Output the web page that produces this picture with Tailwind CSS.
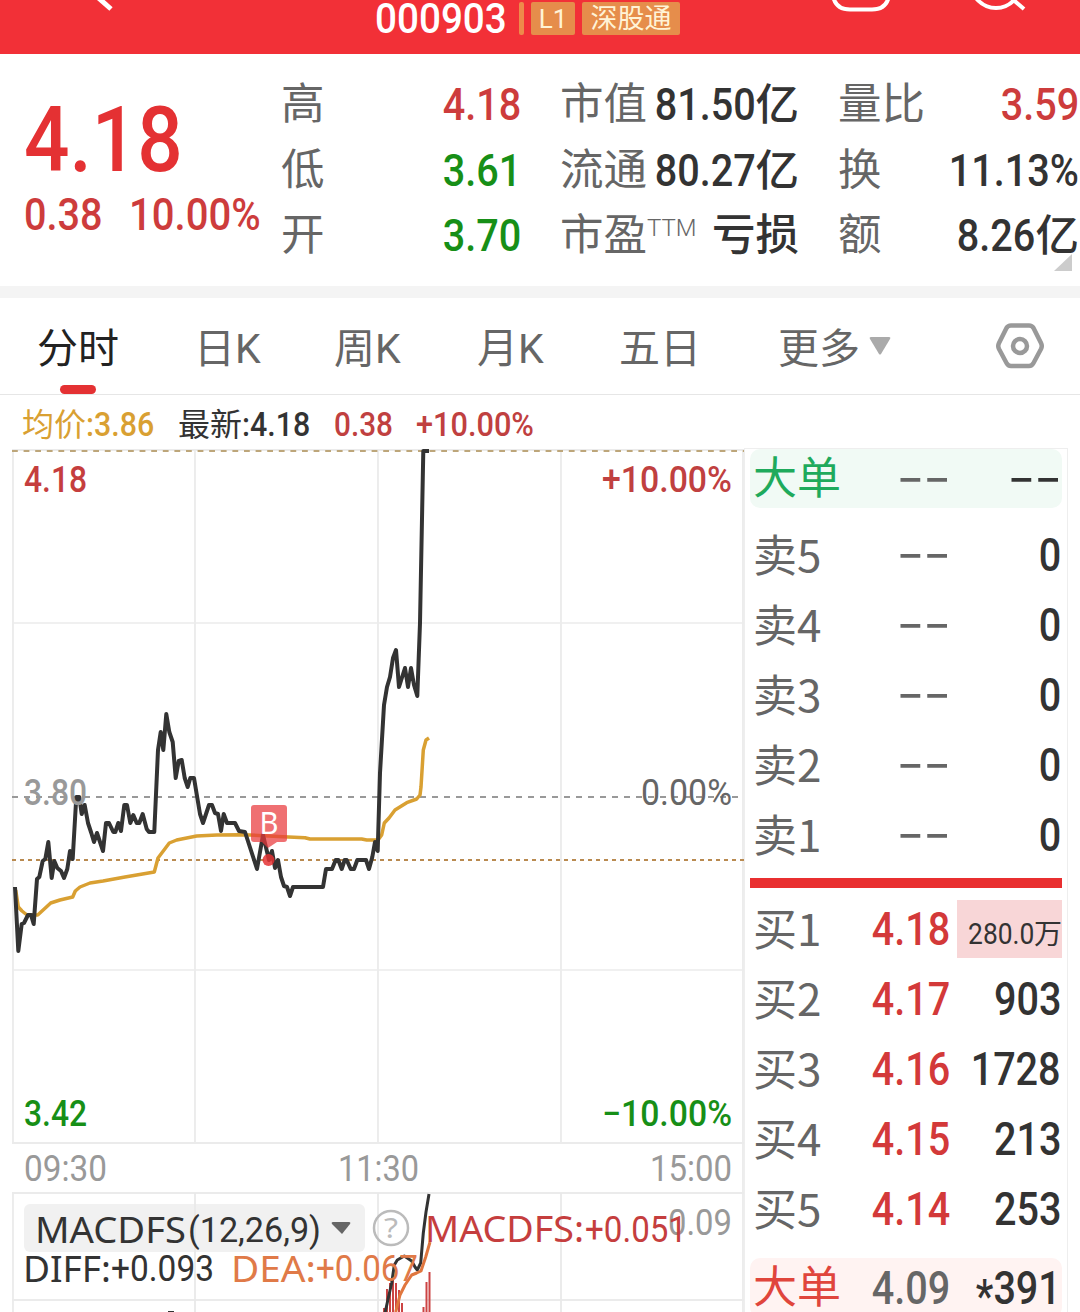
<!DOCTYPE html>
<html lang="zh-CN">
<head>
  <meta charset="UTF-8">
  <meta name="viewport" content="width=device-width, initial-scale=1.0">
  <title>000903 分时</title>
  <script src="https://cdn.jsdelivr.net/npm/@tailwindcss/browser@4"></script>
</head>
<body class="w-[1080px] h-[1312px] overflow-hidden bg-white font-['Roboto','Noto_Sans_CJK_SC',sans-serif] text-[#333] whitespace-nowrap">
  <!-- Header -->
  <header class="relative h-[54px] bg-[#f23037] overflow-hidden">
    <svg class="absolute inset-0" width="1080" height="54" fill="none" stroke="#fff" stroke-width="4">
      <path d="M94 -6L111 9" stroke-width="5"/>
      <path d="M833 -4C835 6 842 9.500 850 9.500H872C880 9.500 887 6 889 -4"/>
      <circle cx="996" cy="-17" r="25"/>
      <path d="M1010 -3L1024 9"/>
    </svg>
    <div class="flex items-center pl-[375px] h-[36px]">
      <div class="w-[144px] text-[42px] leading-[36px] pt-[2px] font-medium text-white"><span class="inline-block origin-left scale-x-[0.92]">000903</span></div>
      <div class="w-[5px] h-[33px] rounded-xs bg-[#ee8a4a]"></div>
      <div class="ml-[7px] w-[44px] h-[33px] rounded-xs bg-[#e68d4b] text-[#fff3d6] text-[26px] leading-[35px] text-center">L1</div>
      <div class="ml-[7px] w-[98px] h-[33px] rounded-xs bg-[#e68d4b] text-[#fff3d6] text-[27px] leading-[34px] text-center">深股通</div>
    </div>
  </header>

  <!-- Quote summary -->
  <section class="relative flex h-[232px] pl-[24px] pt-[21px]">
    <div class="w-[257px] text-[#e43133]">
      <div class="mt-[15px] h-[100px] leading-[100px] text-[91px] font-medium"><span class="inline-block origin-left scale-x-[0.88]">4.18</span></div>
      <div class="flex h-[50px] leading-[50px] text-[45px] text-[#cd3c3c]">
        <div class="w-[105px]"><span class="inline-block origin-left scale-x-[0.88] font-medium">0.38</span></div>
        <div><span class="inline-block origin-left scale-x-[0.89] font-medium">10.00%</span></div>
      </div>
    </div>
    <div id="stats" class="grid grid-flow-col grid-rows-[65.5px_65.5px_65.5px] grid-cols-[240px_239px_241px] gap-x-[39px] h-[197px] text-[43.5px] leading-[60px]"></div>
    <svg class="absolute right-[8px] top-[200px]" width="18" height="17"><path d="M18 0V17H0Z" fill="#ccc"/></svg>
  </section>

  <div class="h-[12px] bg-[#f4f4f4]"></div>

  <!-- Period tabs -->
  <nav class="relative flex h-[97px] border-b border-[#e6e6e6] text-[41px] leading-[102px] text-[#666]">
    <div class="w-[157px] pl-[37px] text-[#222]">分时</div>
    <div class="w-[140px] pl-[37px]">日K</div>
    <div class="w-[143px] pl-[37px]">周K</div>
    <div class="w-[142px] pl-[37px]">月K</div>
    <div class="w-[158px] pl-[37px]">五日</div>
    <div class="flex pl-[38px]">更多
      <svg class="ml-[8px] mt-[38px]" width="24" height="20"><path d="M3 1H21Q23 1 22 3L13 18Q12 19 11 18L2 3Q1 1 3 1Z" fill="#aaa"/></svg>
    </div>
    <svg class="absolute left-[994px] top-[23px]" width="52" height="50" fill="none" stroke="#999" stroke-width="4.5" stroke-linejoin="round">
      <path d="M17 4.500H35Q38 4.500 39.500 7L47 22Q48.500 25 47 28L39.500 42Q38 45 35 45H17Q14 45 12.500 42L5 28Q3.500 25 5 22L12.500 7Q14 4.500 17 4.500Z"/>
      <circle cx="26" cy="25" r="7"/>
    </svg>
    <div class="absolute left-[60px] top-[87px] w-[36px] h-[9px] rounded-full bg-[#e43133]"></div>
  </nav>

  <!-- Average / latest price -->
  <div class="flex h-[53px] pl-[22px] text-[33px] leading-[59px]">
    <div class="w-[156px] text-[#d9a032]"><span class="text-[32px]">均价</span><span class="inline-block origin-left scale-x-[0.92] font-medium">:3.86</span></div>
    <div class="w-[156px]"><span class="text-[32px]">最新</span><span class="inline-block origin-left scale-x-[0.92] font-medium">:4.18</span></div>
    <div class="w-[82px] text-[#c04040]"><span class="inline-block origin-left scale-x-[0.9] font-medium">0.38</span></div>
    <div class="text-[#c04040]"><span class="inline-block origin-left scale-x-[0.93] font-medium">+10.00%</span></div>
  </div>

  <main class="flex h-[864px]">
    <!-- Intraday chart and indicator panel -->
    <svg class="shrink-0" width="744" height="864" viewBox="0 448 744 864" fill="none">
      <g stroke="#ebebeb" stroke-width="1.800">
        <path d="M12 450H744M12 1143H744M13 450V1143M195 450V1143M378 450V1143M561 450V1143M743 450V1312"/>
        <path d="M12 623H744M12 970H744" stroke-width="1.300"/>
        <path d="M12 1193H744M12 1300H744M13 1193V1312"/>
      </g>
      <rect x="24" y="1204" width="341" height="48" rx="6" fill="#f1f1f1"/>
      <path d="M195 1193V1312M378 1193V1312M561 1193V1312" stroke="#e9e9e9" stroke-width="1.800"/>

      <path d="M12 451H744" stroke="#bda67a" stroke-width="2" stroke-dasharray="5.800 5.800"/>
      <path d="M12 797H744" stroke="#999" stroke-width="2" stroke-dasharray="6 6"/>
      <path d="M12 860H744" stroke="#b98a50" stroke-width="2" stroke-dasharray="4 4"/>

      <polyline stroke="#d9a032" stroke-width="3.500" stroke-linejoin="round" points="15.700,890 18.300,907 22,911 27,915 37.700,915 50.700,903 60,900 72.700,897 75.300,891 80,887 90,883 103,881 125,877 154.300,872 158,858 169.300,843 176.700,840 196.700,836 217,835 240,834.700 250,835 283,836.700 305,837.700 310,839 361.700,839 366.700,840 378,840 381.700,835 384.300,823 389,818 395,810 406.700,802.700 416.700,799 420,795 421,787 423.300,750 426,740 429,738"/>
      <polyline stroke="#333" stroke-width="4" stroke-linejoin="round" points="15,887 18.300,951 21.700,924 24,923 28,915 31,915 33.700,924 37,879 39.300,877 42.700,861 45.300,859 48.300,842 51.700,878 54.300,861 57.300,868 61,871 64,878 67.300,869 70,851 72.700,859 76.300,797 79.300,797 81.700,814 84.700,805 88,823 91.300,833 94,842 97,833 103,851 106,823 109,823 113.300,832 115.300,832 118.300,823 121,831 124.300,805 127,805 130.300,823 133.300,815 136.700,823 139.300,823 142.700,814 146.700,829 149,832 154.300,832 158,750 160.700,732 163.300,750 166.300,714 169.300,732 172.700,742 175.700,778 178.700,761 181.700,760 184.700,778 187.700,787 190.300,778 194,778 200,814 203,823 209,805 212,805 215,813 218,814 221,831 223.700,814 227,823 235,823 239,831 245,832 257,869 263,835 269,860 272,851 275,868 278,860 281,877 284,886 287,887 290,896 293,887 323,887 326,869 332,869 335.700,860 338.300,860 341.700,869 344.700,860 346.700,860 350.700,869 354,869 357.300,860 366,860 369,869 372.300,857 375,842 377.700,851 380,773 384,705 387,687 390,677 393,658 396,650 399,687 405,668 408,687 411,668 414,685 417.300,696 420,623 423.300,451 429,451"/>

      <!-- Buy marker -->
      <circle cx="268.500" cy="860" r="6" fill="#e43133" fill-opacity="0.85"/>
      <path d="M254 805H284Q287 805 287 808V839Q287 842 284 842H277L268 848L262 842H254Q251 842 251 839V808Q251 805 254 805Z" fill="#e9393c" fill-opacity="0.72"/>
      <text x="259.500" y="834" textLength="19" lengthAdjust="spacingAndGlyphs" font-size="30" fill="#fff" font-family="Noto Sans">B</text>

      <!-- Axis labels -->
      <g font-size="36" font-weight="500">
        <text x="24" y="492" textLength="63" lengthAdjust="spacingAndGlyphs" fill="#c53e3e">4.18</text>
        <text x="602" y="492" textLength="130" lengthAdjust="spacingAndGlyphs" fill="#c04040">+10.00%</text>
        <text x="24" y="805" textLength="63" lengthAdjust="spacingAndGlyphs" fill="#999">3.80</text>
        <text x="641" y="805" textLength="91" lengthAdjust="spacingAndGlyphs" fill="#666" font-weight="400">0.00%</text>
        <text x="24" y="1126" textLength="63" lengthAdjust="spacingAndGlyphs" fill="#178f17">3.42</text>
        <text x="602" y="1126" textLength="130" lengthAdjust="spacingAndGlyphs" fill="#178f17">−10.00%</text>
      </g>
      <g font-size="36" fill="#999">
        <text x="24" y="1181" textLength="83" lengthAdjust="spacingAndGlyphs">09:30</text>
        <text x="338" y="1181" textLength="81" lengthAdjust="spacingAndGlyphs">11:30</text>
        <text x="650" y="1181" textLength="82" lengthAdjust="spacingAndGlyphs">15:00</text>
        <text x="668" y="1235" textLength="64" lengthAdjust="spacingAndGlyphs">0.09</text>
      </g>

      <!-- MACD bars and lines -->
      <path d="M384 1308V1312M387 1289V1312M390 1283V1312M393 1278V1312M396 1283V1312M399 1290V1312M402 1303V1312M423.500 1307V1312M426.500 1282V1312M429.500 1272V1312" stroke="#cc4444" stroke-width="2"/>
      <path d="M168 1312H174" stroke="#333" stroke-width="2"/>
      <polyline stroke="#333" stroke-width="3" stroke-linejoin="round" points="429,1194 426,1212 423.300,1233 420.700,1263 417.300,1270 415,1267 411.700,1261 404.300,1256 397.300,1260 394.300,1265 391.700,1283 388.300,1298 385,1313"/>
      <polyline stroke="#e0763e" stroke-width="3" stroke-linejoin="round" points="430,1242 425.700,1257 421,1271 416.700,1273 411.700,1275 405,1285 400,1295 395.700,1312"/>

      <!-- Indicator legend -->
      <g font-family="Noto Sans" font-size="37">
        <text x="35" y="1243" textLength="151" lengthAdjust="spacingAndGlyphs" fill="#333">MACDFS</text>
        <text x="188" y="1242" textLength="133" lengthAdjust="spacingAndGlyphs" fill="#333" font-family="Roboto" font-size="35">(12,26,9)</text>
        <path d="M333 1222H349Q351 1222 350 1224L342 1234L332 1224Q331 1222 333 1222Z" fill="#666"/>
        <circle cx="391" cy="1228" r="17" stroke="#bbb" stroke-width="2.500"/>
        <text x="384" y="1238" textLength="14" lengthAdjust="spacingAndGlyphs" fill="#bbb" font-size="28">?</text>
        <text x="425" y="1242" textLength="159" lengthAdjust="spacingAndGlyphs" fill="#c53e3e">MACDFS:</text>
        <text x="585" y="1242" textLength="102" lengthAdjust="spacingAndGlyphs" fill="#c53e3e" font-family="Roboto" font-size="36">+0.051</text>
        <text x="23" y="1282" textLength="88" lengthAdjust="spacingAndGlyphs" fill="#333">DIFF:</text>
        <text x="111" y="1281" textLength="103" lengthAdjust="spacingAndGlyphs" fill="#333" font-family="Roboto" font-size="36">+0.093</text>
        <text x="231" y="1282" textLength="85" lengthAdjust="spacingAndGlyphs" fill="#e07a48">DEA:</text>
        <text x="316" y="1281" textLength="102" lengthAdjust="spacingAndGlyphs" fill="#e07a48" font-family="Roboto" font-size="36">+0.067</text>
      </g>
    </svg>

    <!-- Order book -->
    <aside id="book" class="w-[324px] border-t border-x border-[#eee] pl-[5px] pr-[5px] text-[44px]"></aside>
  </main>

  <script>
    const stats = [
      ["高", "4.18", "text-[#cd3c3c]"],
      ["低", "3.61", "text-[#178f17]"],
      ["开", "3.70", "text-[#178f17]"],
      ["市值", "81.50亿", "text-[#333]"],
      ["流通", "80.27亿", "text-[#333]"],
      ["市盈<span class='inline-block align-top text-[24px] leading-[44px] font-[\"Noto_Sans\"] font-light'>TTM</span>", "亏损", "text-[#333]"],
      ["量比", "3.59", "text-[#cd3c3c]"],
      ["换", "11.13%", "text-[#333]"],
      ["额", "8.26亿", "text-[#333]"]
    ];

    // digits are condensed, the unit after them is not
    function renderValue(value) {
      const unit = value.replace(/[\d.%]/g, '');
      const number = value.replace(unit, '');
      return `<span class="inline-block origin-right scale-x-[0.88] text-[45px] font-medium">${number}</span><span class="font-medium">${unit}</span>`;
    }

    document.getElementById('stats').innerHTML = stats.map(([label, value, color]) => `
      <div class="flex justify-between">
        <div class="w-[40px] text-[#666]">${label}</div>
        <div class="${color}">${renderValue(value)}</div>
      </div>
    `).join('');

    const sells = ["卖5", "卖4", "卖3", "卖2", "卖1"];
    const buys = [
      ["买1", "4.18", "280.0万"],
      ["买2", "4.17", "903"],
      ["买3", "4.16", "1728"],
      ["买4", "4.15", "213"],
      ["买5", "4.14", "253"]
    ];
    const dashes = '<span class="inline-block origin-right scale-x-[1.7] -translate-y-[6px] font-[\'Noto_Sans_CJK_SC\'] font-medium">--</span>';
    const big = '<span class="inline-block origin-right scale-x-[0.86] text-[46px] font-medium">';

    document.getElementById('book').innerHTML = `
      <div class="flex h-[59px] leading-[61px] rounded-[10px] bg-[#f1faf5]">
        <div class="w-[100px] pl-[3px] text-[#1faa5c]">大单</div>
        <div class="w-[100px] text-right text-[#666]">${dashes}</div>
        <div class="w-[111px] text-right">${dashes}</div>
      </div>
      <div class="pt-[12px] h-[370px]">
      ${sells.map(label => `
        <div class="flex h-[70px] leading-[70px]">
          <div class="w-[100px] pl-[3px] -translate-y-[2px] text-[#666] font-['Noto_Sans_CJK_SC']">${label}</div>
          <div class="w-[100px] text-right text-[#666]">${dashes}</div>
          <div class="w-[111px] text-right">${big}0</span></div>
        </div>`).join('')}
      </div>
      <div class="h-[10px] bg-[#e92f30]"></div>
      <div class="pt-[6px] h-[370px]">
      ${buys.map(([label, price, volume], index) => `
        <div class="flex h-[70px] leading-[70px]">
          <div class="w-[100px] pl-[3px] -translate-y-[2px] text-[#666] font-['Noto_Sans_CJK_SC']">${label}</div>
          <div class="w-[100px] text-right text-[#d33939]">${big}${price}</span></div>
          ${index === 0
            ? `<div class="ml-[7px] mt-[6px] w-[105px] h-[58px] leading-[68px] bg-[#f8d6d7] text-right text-[28px]"><span class="inline-block origin-right scale-x-[0.88] text-[30px]">280.0</span>万</div>`
            : `<div class="w-[111px] text-right">${big}${volume}</span></div>`}
        </div>`).join('')}
      </div>
      <div class="flex h-[59px] leading-[60px] rounded-[10px] bg-[#fff3f2]">
        <div class="w-[100px] pl-[3px] text-[#e0453c]">大单</div>
        <div class="w-[100px] text-right text-[#666]">${big}4.09</span></div>
        <div class="w-[111px] text-right">${big}<span class="relative top-[8px]">*</span>391</span></div>
      </div>
    `;
  </script>
</body>
</html>
